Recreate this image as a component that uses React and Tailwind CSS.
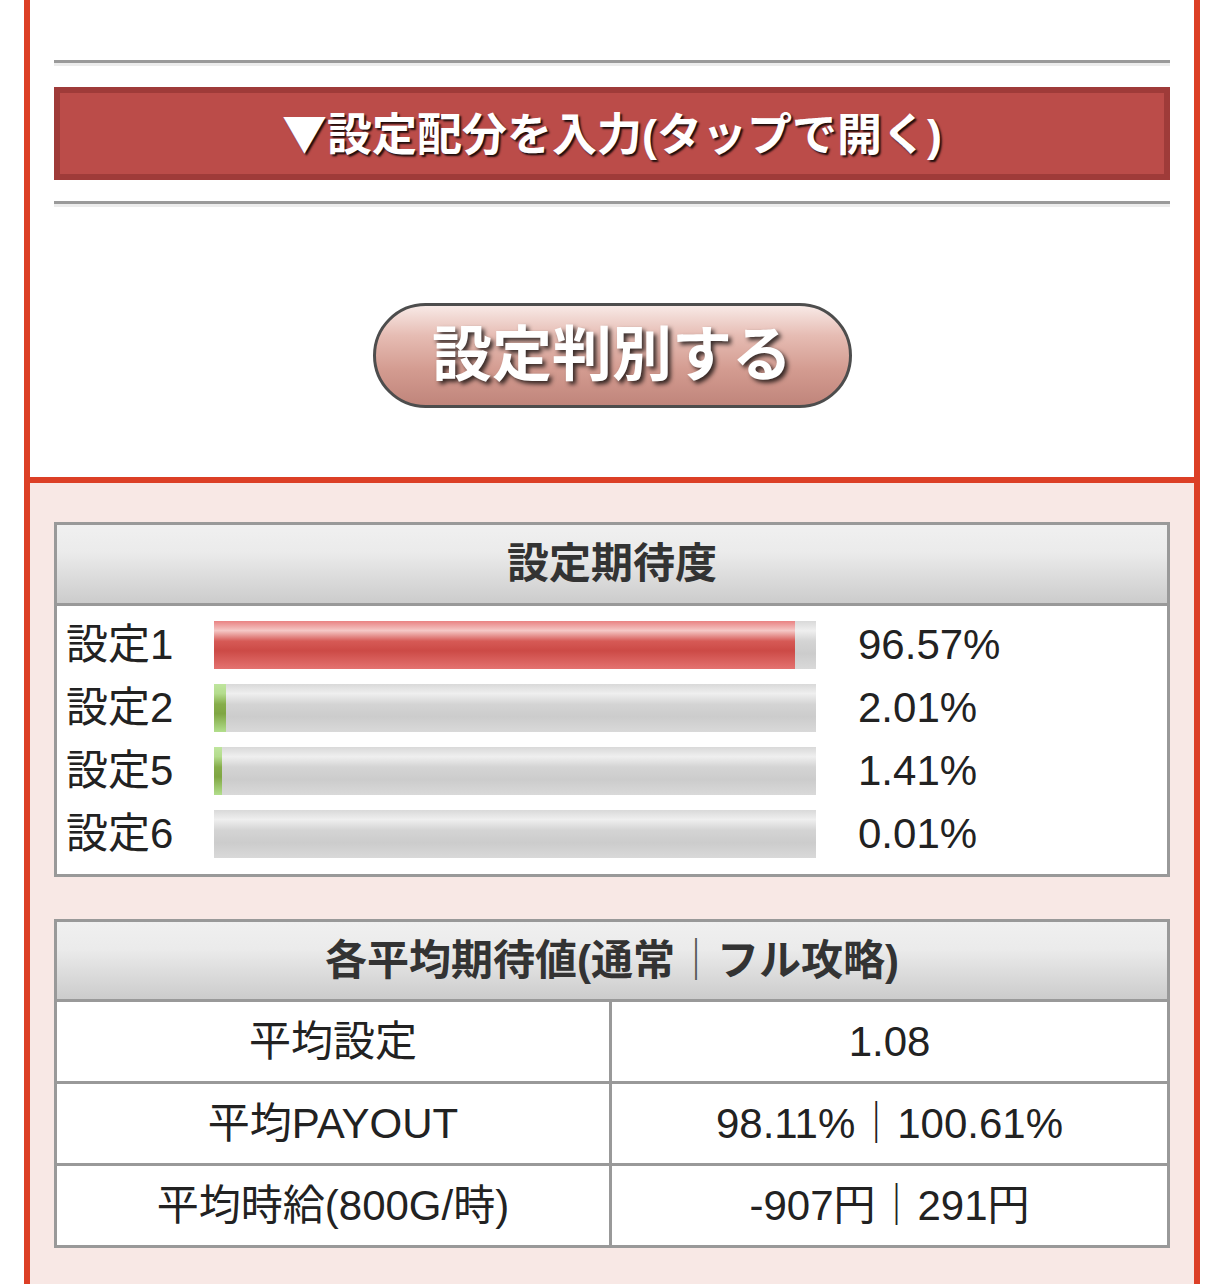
import React from "react";

const rows = [
  { label: "設定1", pct: 96.57, color: "red" },
  { label: "設定2", pct: 2.01, color: "green" },
  { label: "設定5", pct: 1.41, color: "green" },
  { label: "設定6", pct: 0.01, color: "green" },
];

function Bar({ pct, color }) {
  const fill =
    color === "red"
      ? "bg-[linear-gradient(to_bottom,#e98282_0%,#f5c8c6_20%,#d65a56_42%,#cc4a46_62%,#e47270_100%)]"
      : "bg-[linear-gradient(to_bottom,#bfe59e_0%,#b4dc8c_20%,#86ad4a_42%,#7fa642_62%,#b2de8c_100%)]";
  return (
    <div className="h-[48px] w-[602px] bg-[linear-gradient(to_bottom,#d9d9d9_0%,#efefef_20%,#d4d4d4_42%,#cccccc_68%,#d9d9d9_100%)]">
      <div className={`h-full ${fill}`} style={{ width: `${pct}%` }} />
    </div>
  );
}

function Hr() {
  return <div className="h-[6px] border-t-[3px] border-b-[3px] border-t-[#9a9a9a] border-b-[#ececec]" />;
}

export default function App() {
  return (
    <div className="w-[1227px] h-[1284px] overflow-hidden bg-white font-['Liberation_Sans','Noto_Sans_CJK_JP',sans-serif] text-[#222]">
      <div className="ml-[24px] w-[1176px] h-full border-x-[6px] border-[#dc3f26] flex flex-col">
        {/* top white section */}
        <div className="bg-white px-[24px] pt-[60px] pb-[69px] flex flex-col">
          <Hr />
          <div className="mt-[21px] h-[93px] border-[6px] border-[#9f3b39] bg-[#bb4c49] flex items-center justify-center">
            <span className="text-white font-bold text-[45px] leading-none [text-shadow:2px_2px_2px_rgba(0,0,0,0.85)]">
              <span className="font-['Noto_Sans_CJK_JP',sans-serif]">▼</span>設定配分を入力(タップで開く)
            </span>
          </div>
          <div className="mt-[21px]">
            <Hr />
          </div>
          <div className="mt-[96px] flex justify-center">
            <div className="w-[479px] h-[105px] rounded-full border-[3px] border-[#4d4d4d] bg-[linear-gradient(to_bottom,#f8e9e6_0%,#e6bcb3_30%,#d39b90_65%,#c0857b_100%)] flex items-center justify-center">
              <span className="text-white font-bold text-[60px] leading-none [text-shadow:3px_3px_4px_rgba(0,0,0,0.75)]">
                設定判別する
              </span>
            </div>
          </div>
        </div>

        {/* pink section */}
        <div className="flex-1 border-t-[6px] border-[#dc3f26] bg-[#f8e8e5] px-[24px] pt-[39px]">
          {/* box 1 */}
          <div className="border-[3px] border-[#999999] bg-white">
            <div className="h-[81px] border-b-[3px] border-[#999999] bg-[linear-gradient(to_bottom,#f0f0f0_0%,#ebebeb_35%,#cccccc_100%)] flex items-center justify-center">
              <span className="font-bold text-[42px] leading-none text-[#333]">設定期待度</span>
            </div>
            <div className="pl-[9px] pt-[7px] pb-[9px] flex flex-col">
              {rows.map((r) => (
                <div key={r.label} className="h-[63px] flex items-center">
                  <div className="w-[148px] text-[42px] leading-none">{r.label}</div>
                  <Bar pct={r.pct} color={r.color} />
                  <div className="ml-[42px] text-[42px] leading-none">{r.pct.toFixed(2)}%</div>
                </div>
              ))}
            </div>
          </div>

          {/* box 2 */}
          <div className="mt-[42px] border-[3px] border-[#999999] bg-white">
            <div className="h-[80px] border-b-[3px] border-[#999999] bg-[linear-gradient(to_bottom,#f0f0f0_0%,#ebebeb_35%,#cccccc_100%)] flex items-center justify-center">
              <span className="font-bold text-[42px] leading-none text-[#333]">
                各平均期待値(通常<span className="font-normal text-[#555]">｜</span>フル攻略)
              </span>
            </div>
            {[
              ["平均設定", "1.08"],
              ["平均PAYOUT", "98.11%｜100.61%"],
              ["平均時給(800G/時)", "-907円｜291円"],
            ].map(([k, v], i) => (
              <div
                key={k}
                className={`grid grid-cols-2 ${i > 0 ? "border-t-[3px] border-[#999999]" : ""}`}
              >
                <div className="h-[79px] flex items-center justify-center text-[42px] leading-none border-r-[3px] border-[#999999]">
                  {k}
                </div>
                <div className="h-[79px] flex items-center justify-center text-[42px] leading-none">
                  {v}
                </div>
              </div>
            ))}
          </div>
        </div>
      </div>
    </div>
  );
}
